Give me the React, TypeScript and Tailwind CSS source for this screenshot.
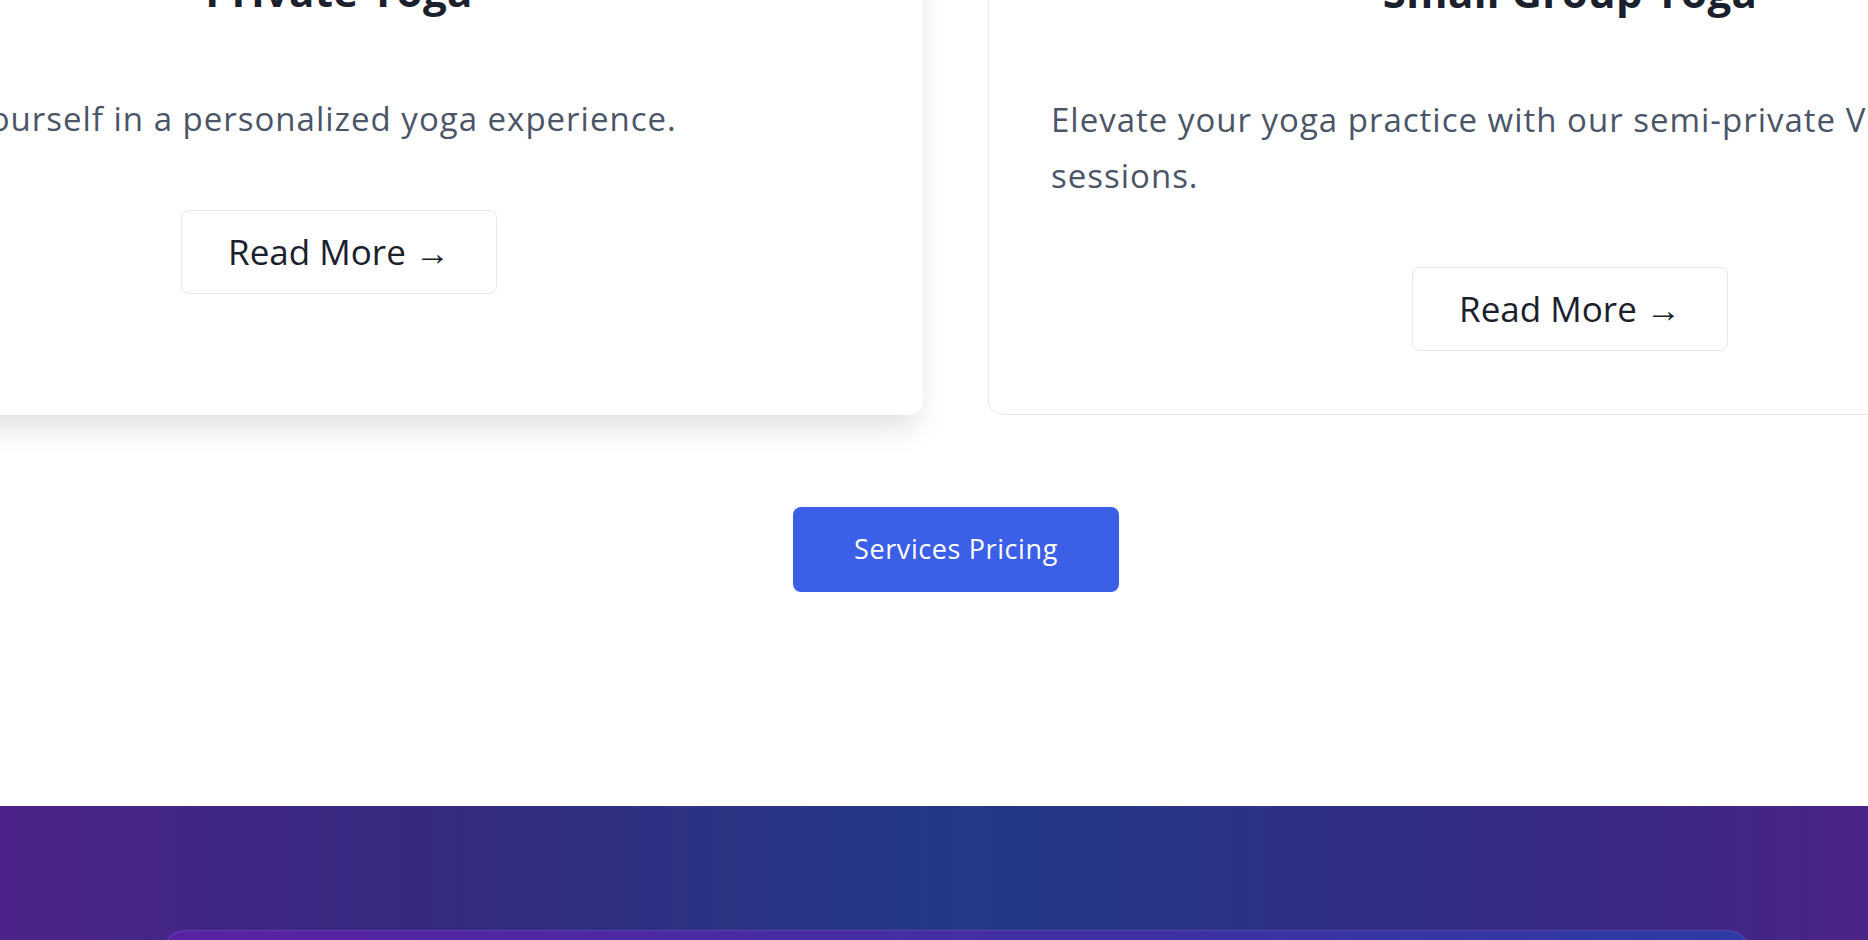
import React from 'react';

const cards = [
  {
    title: 'Private Yoga',
    body: ['Immerse yourself in a personalized yoga experience.'],
    featured: true,
  },
  {
    title: 'Small Group Yoga',
    body: ['Elevate your yoga practice with our semi-private Vinyasa and Hatha', 'sessions.'],
    featured: false,
  },
];

function ServiceCard({ title, body, featured }: { title: string; body: string[]; featured: boolean }) {
  return (
    <div
      className={`w-[1166px] shrink-0 rounded-[14px] bg-white pl-[62px] pr-16 pt-16 pb-[63px] ${
        featured ? 'shadow-[0_18px_30px_-6px_rgba(0,0,0,0.13)]' : 'border border-[#e5e7eb]'
      }`}
    >
      <h3 className="text-center text-[42px] leading-[48px] font-bold text-[#1a202c] tracking-[0.4px]">{title}</h3>
      <p className="mt-[76px] text-[33px] leading-[56px] tracking-[1px] text-[#4a5568] whitespace-nowrap">
        {body.map((line, i) => (
          <span key={i} className="block">
            {line}
          </span>
        ))}
      </p>
      <div className="mt-[63px] flex justify-center">
        <a
          href="#"
          className="rounded-lg border border-[#e5e7eb] bg-white px-[46px] py-[21px] text-[35px] leading-[40px] text-[#1a202c]"
        >
          Read More →
        </a>
      </div>
    </div>
  );
}

export default function App() {
  return (
    <main className="min-h-screen bg-white font-['Open_Sans',sans-serif] overflow-hidden">
      {/* Services slider */}
      <section className="overflow-hidden pb-[214px]">
        <div className="flex items-stretch gap-[65px] -ml-[243px] -mt-[97px] pb-8">
          {cards.map(c => (
            <ServiceCard key={c.title} {...c} />
          ))}
        </div>
        <div className="flex justify-center pl-[44px] mt-[60px]">
          <button className="h-[85px] w-[326px] rounded-lg bg-[#3b5fe6] text-[27px] tracking-[0.6px] text-white">
            Services Pricing
          </button>
        </div>
      </section>

      {/* Contact band */}
      <section className="bg-[linear-gradient(90deg,#4c2388_0%,#362a80_22%,#233a86_52%,#322c84_78%,#4a2386_100%)] pt-[124px] pb-24">
        <div className="flex justify-center pl-[44px]">
          <div className="h-[360px] w-[1589px] rounded-3xl border border-[#6a4fc9]/60 bg-[linear-gradient(90deg,#5a21a3,#2c3aa1)]" />
        </div>
      </section>
    </main>
  );
}
